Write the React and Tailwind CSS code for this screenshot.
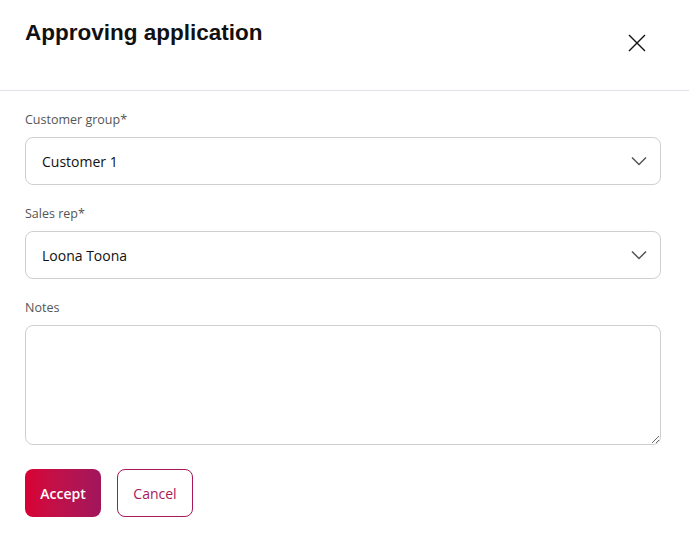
import { useState } from 'react';

const body = { fontFamily: '"Open Sans", "Noto Sans", sans-serif' };

function Chevron() {
  return (
    <svg width="16" height="10" viewBox="0 0 16 10" fill="none" stroke="#555" strokeWidth="1.5">
      <path d="M1 1.5l7 7 7-7" />
    </svg>
  );
}

function SelectBox({ value }) {
  return (
    <div className="flex h-[48px] items-center justify-between rounded-lg border border-[#cfcfcf] bg-white pl-[16px] pr-[13px]">
      <span className="text-[14px] text-[#111]">{value}</span>
      <Chevron />
    </div>
  );
}

export default function App() {
  const [notes, setNotes] = useState('');

  return (
    <div className="min-h-screen w-full bg-white" style={body}>
      <div className="flex h-[91px] items-start justify-between border-b border-[#e2dfe9] pl-[25px] pr-[43px]">
        <h1
          className="pt-[18px] text-[22.5px] font-bold leading-[30px] text-[#111]"
          style={{ fontFamily: '"Liberation Sans", Arial, sans-serif' }}
        >
          Approving application
        </h1>
        <button className="mt-[34px] text-black">
          <svg width="18" height="18" viewBox="0 0 18 18" fill="none" stroke="#111" strokeWidth="1.4">
            <path d="M1 1l16 16M17 1L1 17" />
          </svg>
        </button>
      </div>

      <div className="flex flex-col pl-[25px] pr-[28px] pt-[20px]">
        <label className="mb-[8px] text-[12.5px] leading-[18px] text-[#555]">Customer group*</label>
        <SelectBox value="Customer 1" />

        <label className="mb-[8px] mt-[20px] text-[12.5px] leading-[18px] text-[#555]">Sales rep*</label>
        <SelectBox value="Loona Toona" />

        <label className="mb-[8px] mt-[20px] text-[12.5px] leading-[18px] text-[#555]">Notes</label>
        <textarea
          value={notes}
          onChange={(e) => setNotes(e.target.value)}
          className="h-[120px] w-full rounded-lg border border-[#cfcfcf] px-[16px] py-[12px] text-[14px] outline-none"
        />

        <div className="mt-[24px] flex gap-[16px]">
          <button className="h-[48px] w-[76px] rounded-lg bg-gradient-to-r from-[#d80034] to-[#a1155c] text-[14px] font-semibold text-white">
            Accept
          </button>
          <button className="h-[48px] w-[76px] rounded-lg border border-[#a8185a] bg-white text-[14px] font-medium text-[#a8185a]">
            Cancel
          </button>
        </div>
      </div>
    </div>
  );
}
